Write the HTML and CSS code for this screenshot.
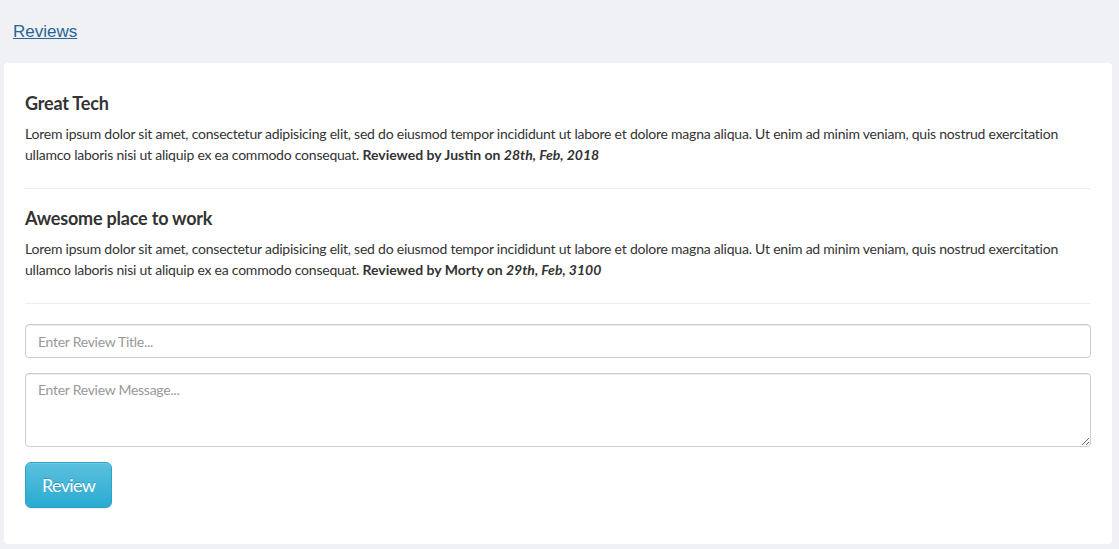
FILE: index.html
```html
<!DOCTYPE html>
<html>
<head>
<meta charset="utf-8">
<link rel="stylesheet" href="styles.css">
</head>
<body>
<header class="top">
  <a class="crumb" href="#">Reviews</a>
</header>
<main class="card">
  <article class="review">
    <h4 class="review-title">Great Tech</h4>
    <p class="review-text">Lorem ipsum dolor sit amet, consectetur adipisicing elit, sed do eiusmod tempor incididunt ut labore et dolore magna aliqua. Ut enim ad minim veniam, quis nostrud exercitation ullamco laboris nisi ut aliquip ex ea commodo consequat. <b class="byline">Reviewed by Justin on <i>28th, Feb, 2018</i></b></p>
  </article>
  <hr class="sep">
  <article class="review">
    <h4 class="review-title">Awesome place to work</h4>
    <p class="review-text">Lorem ipsum dolor sit amet, consectetur adipisicing elit, sed do eiusmod tempor incididunt ut labore et dolore magna aliqua. Ut enim ad minim veniam, quis nostrud exercitation ullamco laboris nisi ut aliquip ex ea commodo consequat. <b class="byline">Reviewed by Morty on <i>29th, Feb, 3100</i></b></p>
  </article>
  <hr class="sep">
  <form class="review-form">
    <input class="field" type="text" placeholder="Enter Review Title...">
    <textarea class="field area" rows="3" placeholder="Enter Review Message..."></textarea>
    <div class="actions"><button class="btn" type="button">Review</button></div>
  </form>
</main>
</body>
</html>
```
FILE: styles.css
```css
html, body { margin: 0; padding: 0; }
body {
  background: #eff1f4;
  font-family: Lato, "Noto Sans", sans-serif;
  font-size: 14px;
  color: #333;
}
.top {
  height: 63px;
  padding: 0 0 0 13px;
  display: flex;
  align-items: center;
  box-sizing: border-box;
}
.crumb {
  font-family: "Liberation Sans", Arial, sans-serif;
  font-size: 17px;
  color: #2a6496;
  text-decoration: underline;
}
.card {
  background: #fff;
  margin: 0 7px 5px 4px;
  border-radius: 4px;
  padding: 20px 21px 21px;
  height: 481px;
  box-sizing: border-box;
  display: flex;
  flex-direction: column;
  letter-spacing: -0.23px;
}
.review { display: flex; flex-direction: column; }
.review-title {
  font-size: 18px;
  font-weight: 700;
  line-height: 20px;
  margin: 10px 0 10px;
  color: #333;
  letter-spacing: -0.2px;
}
.review-text {
  margin: 0 0 10px;
  line-height: 21px;
}
.byline { letter-spacing: 0; }
.sep {
  width: 100%;
  border: 0;
  border-top: 1px solid #eee;
  margin: 13px 0 9px;
}
.review-form { margin-top: 11px; display: flex; flex-direction: column; }
.field {
  display: block;
  width: 100%;
  box-sizing: border-box;
  height: 34px;
  padding: 6px 12px;
  font-family: inherit;
  font-size: 14px;
  letter-spacing: -0.28px;
  line-height: 20px;
  color: #555;
  border: 1px solid #ccc;
  border-radius: 4px;
  box-shadow: inset 0 1px 1px rgba(0,0,0,.075);
  margin: 0 0 15px;
}
.field::placeholder { color: #999; }
.area { height: 74px; resize: vertical; margin-bottom: 15px; }
.actions { display: flex; }
.btn {
  font-family: inherit;
  font-size: 18px;
  letter-spacing: -0.65px;
  line-height: 24px;
  padding: 10px 16px;
  border-radius: 6px;
  color: #fff;
  border: 1px solid #28a4c9;
  background-image: linear-gradient(to bottom, #5bc0de 0, #2aabd2 100%);
  text-shadow: 0 -1px 0 rgba(0,0,0,.2);
  box-shadow: inset 0 1px 0 rgba(255,255,255,.15), 0 1px 1px rgba(0,0,0,.075);
}
```
